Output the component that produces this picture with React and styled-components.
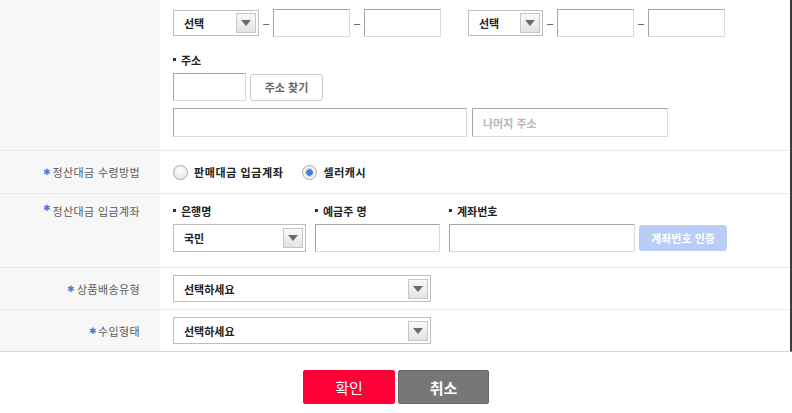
import React from 'react';
import styled, { createGlobalStyle } from 'styled-components';

const GlobalStyle = createGlobalStyle`
  body {
    margin: 0;
    background: #ffffff;
    font-family: "Liberation Sans", "Noto Sans CJK KR", sans-serif;
    font-size: 11px;
    color: #333333;
  }
`;

const Page = styled.div`
  width: 792px;
`;

const Table = styled.div`
  width: 790px;
  border-right: 2px solid #3c3c3c;
  border-bottom: 1px solid #d8d8d8;
`;

const Row = styled.div`
  display: grid;
  grid-template-columns: 160px 1fr;
  min-height: ${(p) => p.$height || 0}px;
  border-bottom: ${(p) => (p.$last ? 'none' : '1px solid #e9e9e9')};
`;

const LabelCell = styled.div`
  background: #f7f7f7;
  display: flex;
  justify-content: flex-end;
  align-items: ${(p) => (p.$top ? 'flex-start' : 'center')};
  padding: ${(p) => (p.$top ? '9px 20px 0 0' : '0 20px 0 0')};
  color: #5a5a5a;
  letter-spacing: 0.4px;
`;

const Star = styled.span`
  color: #4a7bd8;
  font-size: 9px;
  margin-right: 1px;
`;

const Cell = styled.div`
  display: flex;
  flex-direction: column;
  justify-content: ${(p) => (p.$center ? 'center' : 'flex-start')};
  padding: ${(p) => p.$pad || '0 0 0 13px'};
`;

const Line = styled.div`
  display: flex;
  align-items: ${(p) => (p.$bottom ? 'flex-end' : 'center')};
  gap: ${(p) => p.$gap || 0}px;
  margin-top: ${(p) => p.$mt || 0}px;
`;

const Input = styled.div`
  box-sizing: border-box;
  width: ${(p) => p.$w}px;
  height: ${(p) => p.$h || 28}px;
  border: 1px solid;
  border-color: #a6a6a6 #dadada #dadada #a6a6a6;
  background: #ffffff;
  display: flex;
  align-items: center;
  padding-left: 10px;
  color: #b8b8b8;
  font-weight: bold;
`;

const SelectBox = styled.div`
  box-sizing: border-box;
  position: relative;
  width: ${(p) => p.$w}px;
  height: ${(p) => p.$h || 26}px;
  border: 1px solid #bdbdbd;
  background: #ffffff;
  display: flex;
  align-items: center;
  padding-left: 10px;
  font-weight: bold;
  color: #222222;
`;

const Arrow = styled.span`
  position: absolute;
  right: 2px;
  top: 50%;
  transform: translateY(-50%);
  box-sizing: border-box;
  width: 20px;
  height: 20px;
  border: 1px solid #c6c6c6;
  background: linear-gradient(#fafafa, #e3e3e3);
  display: flex;
  align-items: center;
  justify-content: center;

  &::after {
    content: '';
    border-left: 5px solid transparent;
    border-right: 5px solid transparent;
    border-top: 6px solid #6b6b6b;
  }
`;

const Dash = styled.span`
  width: 14px;
  text-align: center;
  color: #444444;
`;

const PhoneGroup = styled.div`
  display: flex;
  align-items: center;
`;

const FieldLabel = styled.div`
  display: flex;
  align-items: center;
  height: 17px;
  margin-top: ${(p) => p.$mt || 0}px;
  font-weight: bold;
  color: #222222;

  &::before {
    content: '';
    width: 3px;
    height: 3px;
    background: #333333;
    margin: 0 5px 0 0;
  }
`;

const GrayButton = styled.div`
  box-sizing: border-box;
  width: 73px;
  height: 27px;
  border: 1px solid #c9c9c9;
  border-radius: 3px;
  background: #ffffff;
  display: flex;
  align-items: center;
  justify-content: center;
  color: #666666;
  font-weight: bold;
`;

const VerifyButton = styled.div`
  box-sizing: border-box;
  width: 88px;
  height: 26px;
  margin-left: -5px;
  margin-bottom: 1px;
  border-radius: 3px;
  background: #b9cdf6;
  color: #ffffff;
  font-weight: bold;
  display: flex;
  align-items: center;
  justify-content: center;
`;

const RadioItem = styled.label`
  display: flex;
  align-items: center;
  gap: 6px;
  font-weight: bold;
  letter-spacing: 0.6px;
  color: #222222;
`;

const RadioDot = styled.span`
  box-sizing: border-box;
  width: 15px;
  height: 15px;
  border-radius: 50%;
  border: 1px solid #a9a9a9;
  background: ${(p) =>
    p.$checked
      ? 'radial-gradient(circle, #3f7fd6 0 3px, #cfe0f5 3.5px 4.5px, #f4f4f4 5px)'
      : 'radial-gradient(circle at 50% 30%, #ffffff, #e2e2e2)'};
`;

const Column = styled.div`
  display: flex;
  flex-direction: column;
  gap: 5px;
`;

const Actions = styled.div`
  display: flex;
  justify-content: center;
  gap: 3px;
  margin-top: 18px;
`;

const ActionButton = styled.div`
  box-sizing: border-box;
  width: ${(p) => p.$w}px;
  height: 34px;
  border-radius: 2px;
  display: flex;
  align-items: center;
  justify-content: center;
  font-size: 15px;
  color: #ffffff;
  font-weight: ${(p) => (p.$bold ? 'bold' : 'normal')};
  background: ${(p) => p.$bg};
  border: 1px solid ${(p) => p.$border};
`;

function Select({ w, h, children }) {
  return (
    <SelectBox $w={w} $h={h}>
      {children}
      <Arrow />
    </SelectBox>
  );
}

function Phone({ selectWidth }) {
  return (
    <PhoneGroup>
      <Select w={selectWidth}>선택</Select>
      <Dash>–</Dash>
      <Input $w={77} />
      <Dash>–</Dash>
      <Input $w={77} />
    </PhoneGroup>
  );
}

function Label({ children, top }) {
  return (
    <LabelCell $top={top}>
      <Star>✱</Star>
      {children}
    </LabelCell>
  );
}

export default function App() {
  return (
    <Page>
      <GlobalStyle />
      <Table>
        <Row>
          <LabelCell />
          <Cell $pad="9px 0 13px 13px">
            <Line $gap={27}>
              <Phone selectWidth={86} />
              <Phone selectWidth={75} />
            </Line>
            <FieldLabel $mt={14}>주소</FieldLabel>
            <Line $gap={4} $mt={5}>
              <Input $w={73} />
              <GrayButton>주소 찾기</GrayButton>
            </Line>
            <Line $gap={5} $mt={7}>
              <Input $w={294} $h={29} />
              <Input $w={196} $h={29}>나머지 주소</Input>
            </Line>
          </Cell>
        </Row>

        <Row $height={42}>
          <Label>정산대금 수령방법</Label>
          <Cell $center>
            <Line $gap={19}>
              <RadioItem>
                <RadioDot />
                판매대금 입금계좌
              </RadioItem>
              <RadioItem>
                <RadioDot $checked />
                셀러캐시
              </RadioItem>
            </Line>
          </Cell>
        </Row>

        <Row>
          <Label top>정산대금 입금계좌</Label>
          <Cell $pad="8px 0 15px 13px">
            <Line $gap={9} $bottom>
              <Column>
                <FieldLabel>은행명</FieldLabel>
                <Select w={133} h={28}>국민</Select>
              </Column>
              <Column>
                <FieldLabel>예금주 명</FieldLabel>
                <Input $w={125} />
              </Column>
              <Column>
                <FieldLabel>계좌번호</FieldLabel>
                <Input $w={186} />
              </Column>
              <VerifyButton>계좌번호 인증</VerifyButton>
            </Line>
          </Cell>
        </Row>

        <Row $height={41}>
          <Label>상품배송유형</Label>
          <Cell $center>
            <Select w={258} h={27}>선택하세요</Select>
          </Cell>
        </Row>

        <Row $height={41} $last>
          <Label>수입형태</Label>
          <Cell $center>
            <Select w={258} h={27}>선택하세요</Select>
          </Cell>
        </Row>
      </Table>

      <Actions>
        <ActionButton $w={92} $bg="#ff0039" $border="#ff0039">
          확인
        </ActionButton>
        <ActionButton $w={91} $bg="#777777" $border="#666666" $bold>
          취소
        </ActionButton>
      </Actions>
    </Page>
  );
}
